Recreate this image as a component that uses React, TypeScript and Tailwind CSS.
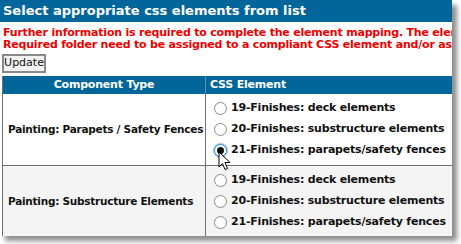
import React from "react";

const font = { fontFamily: '"DejaVu Sans", Verdana, sans-serif' };

function Radio({ checked }: { checked?: boolean }) {
  if (checked) {
    return (
      <span className="relative inline-flex h-[13px] w-[13px] shrink-0 items-center justify-center rounded-full border border-[#3c8fe0] bg-white shadow-[0_0_0_1px_#9cc8f2]">
        <span className="h-[7px] w-[7px] rounded-full bg-[#111]" />
      </span>
    );
  }
  return <span className="inline-block h-[13px] w-[13px] shrink-0 rounded-full border border-[#8a8a8a] bg-white" />;
}

const options = [
  "19-Finishes: deck elements",
  "20-Finishes: substructure elements",
  "21-Finishes: parapets/safety fences",
];

function Row({ label, selected, bg }: { label: string; selected: number; bg: string }) {
  return (
    <div className={`grid grid-cols-[203px_1fr] border-b border-[#6f6f6f] ${bg}`}>
      <div className="flex items-center whitespace-nowrap border-r border-[#6f6f6f] pl-[5px] text-[10.5px] font-bold tracking-[-0.25px] text-[#111]">
        {label}
      </div>
      <div className="flex flex-col gap-[8px] py-[8px] pl-[8px]">
        {options.map((o, i) => (
          <div key={o} className="flex h-[13px] items-center gap-[4px] whitespace-nowrap text-[11px] font-bold tracking-[-0.2px] text-[#111]">
            <Radio checked={i === selected} />
            <span>{o}</span>
          </div>
        ))}
      </div>
    </div>
  );
}

export default function App() {
  return (
    <div className="h-[244px] w-[461px] bg-white" style={font}>
      <div className="relative h-[236px] w-[452px] overflow-hidden bg-white shadow-[5px_5px_5px_rgba(0,0,0,0.45)]">
        <div className="flex h-[22px] items-center bg-[#03669a] pl-[3px] text-[13px] font-bold whitespace-nowrap text-white">
          Select appropriate css elements from list
        </div>
        <div className="mt-[5px] whitespace-nowrap pl-[3px] text-[11px] leading-[12px] font-bold tracking-[-0.2px] text-[#f00000]">
          <div>Further information is required to complete the element mapping. The element</div>
          <div>Required folder need to be assigned to a compliant CSS element and/or assign</div>
        </div>
        <div className="mt-[3px] pl-[2px]">
          <button className="flex h-[19px] w-[44px] items-center justify-center border-2 border-[#8a8a8a] bg-[#f2f2f2] text-[11px] text-[#111]" style={font}>
            Update
          </button>
        </div>
        <div className="mt-[3px] ml-[2px] w-[470px] border-l border-[#6f6f6f]">
          <div className="grid h-[18px] grid-cols-[203px_1fr] bg-[#03669a] text-[11px] font-bold tracking-[-0.2px] text-white">
            <div className="flex items-center justify-center border-r border-[#5f8fae]">Component Type</div>
            <div className="flex items-center pl-[4px]">CSS Element</div>
          </div>
          <Row label="Painting: Parapets / Safety Fences" selected={2} bg="bg-white" />
          <Row label="Painting: Substructure Elements" selected={-1} bg="bg-[#f4f4f4]" />
        </div>
        <svg className="absolute left-[218px] top-[151px]" width="14" height="21" viewBox="0 0 14 21">
          <path d="M1 1 L1 16 L4.5 12.5 L7 18.5 L9.5 17.5 L7 11.5 L12 11.5 Z" fill="white" stroke="black" strokeWidth="1" strokeLinejoin="miter" />
        </svg>
      </div>
    </div>
  );
}
